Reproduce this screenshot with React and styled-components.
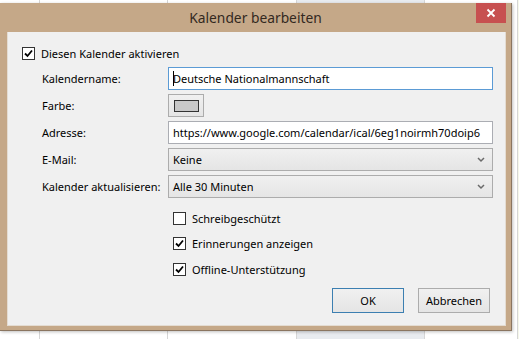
import React from 'react';
import styled, { createGlobalStyle } from 'styled-components';

const GlobalStyle = createGlobalStyle`
  html, body {
    margin: 0;
    padding: 0;
    background: #ffffff;
  }
  body {
    font-family: 'Noto Sans', 'Open Sans', sans-serif;
    font-size: 11px;
    color: #000;
  }
`;

const Desktop = styled.div`
  position: relative;
  width: 519px;
  height: 339px;
  overflow: hidden;
  display: flex;
  background: #ffffff;
`;

const GridColumn = styled.div`
  flex: 0 0 ${({ w }) => w}px;
  border-left: 1px solid ${({ $first }) => ($first ? 'transparent' : '#d6d6d6')};
  background: ${({ $tint }) => $tint || '#ffffff'};
`;

const Window = styled.div`
  position: absolute;
  top: 3px;
  left: 0;
  width: 511px;
  height: 327px;
  display: flex;
  flex-direction: column;
  background: #c5a888;
  border-right: 1px solid #8a7560;
  border-bottom: 1px solid #8a7560;
  box-shadow: 1px 1px 3px rgba(0, 0, 0, 0.25);
`;

const TitleBar = styled.div`
  flex: 0 0 29px;
  display: grid;
  grid-template-columns: 1fr auto 1fr;
  align-items: center;
`;

const Title = styled.div`
  grid-column: 2;
  font-size: 13.8px;
  color: #33291f;
`;

const CloseButton = styled.div`
  grid-column: 3;
  justify-self: end;
  align-self: start;
  width: 30px;
  height: 20px;
  margin-right: 5px;
  background: #c75050;
  display: flex;
  align-items: center;
  justify-content: center;
`;

const Content = styled.div`
  flex: 1;
  margin: 0 5px 4px 7px;
  background: #f0f0f0;
  border: 1px solid #e4dcd2;
  border-top: none;
  padding: 13px 12px 0 14px;
  display: flex;
  flex-direction: column;
`;

const CheckRow = styled.label`
  display: flex;
  align-items: center;
  gap: 6px;
  height: 16px;
  white-space: nowrap;
`;

const Box = styled.span`
  width: 11px;
  height: 11px;
  border: 1px solid #333;
  background: #fff;
  display: flex;
  align-items: center;
  justify-content: center;
`;

const Form = styled.div`
  display: grid;
  grid-template-columns: 126px 1fr;
  grid-auto-rows: 23px;
  row-gap: 4px;
  margin: 6px 0 0 20px;
  align-items: center;
`;

const Label = styled.div`
  white-space: nowrap;
`;

const TextBox = styled.div`
  height: 100%;
  box-sizing: border-box;
  border: 1px solid ${({ $focus }) => ($focus ? '#5b9bd5' : '#abadb3')};
  background: #fff;
  padding: 0 4px;
  display: flex;
  align-items: center;
  overflow: hidden;
  white-space: nowrap;
`;

const Caret = styled.span`
  width: 1px;
  height: 15px;
  background: #000;
  margin-right: -1px;
`;

const ColorButton = styled.div`
  width: 36px;
  height: 23px;
  box-sizing: border-box;
  border: 1px solid #acacac;
  background: linear-gradient(#f0f0f0, #e5e5e5);
  display: flex;
  align-items: center;
  justify-content: center;
`;

const Swatch = styled.div`
  width: 23px;
  height: 10px;
  border: 1px solid #333;
  background: #c8c8c8;
`;

const Select = styled.div`
  height: 100%;
  box-sizing: border-box;
  border: 1px solid #acacac;
  background: linear-gradient(#f0f0f0, #e5e5e5);
  padding: 0 7px 0 4px;
  display: flex;
  align-items: center;
  justify-content: space-between;
`;

const Options = styled.div`
  display: flex;
  flex-direction: column;
  gap: 9.5px;
  margin: 12px 0 0 151px;
`;

const Buttons = styled.div`
  display: flex;
  justify-content: flex-end;
  gap: 14px;
  margin: 11px 3px 0 0;
`;

const Button = styled.div`
  width: 72px;
  height: 25px;
  box-sizing: border-box;
  border: 1px solid ${({ $default }) => ($default ? '#3c7fb1' : '#acacac')};
  background: linear-gradient(#f0f0f0, #e5e5e5);
  display: flex;
  align-items: center;
  justify-content: center;
`;

const Check = () => (
  <svg width="9" height="9" viewBox="0 0 9 9">
    <path d="M1 4.5 L3.5 7 L8 1.5" fill="none" stroke="#000" strokeWidth="1.8" />
  </svg>
);

const Chevron = () => (
  <svg width="8" height="6" viewBox="0 0 8 6">
    <path d="M1 1 L4 4 L7 1" fill="none" stroke="#6a6a6a" strokeWidth="1.5" />
  </svg>
);

const Checkbox = ({ checked, children }) => (
  <CheckRow>
    <Box>{checked && <Check />}</Box>
    {children}
  </CheckRow>
);

const columns = [
  { w: 38, first: true },
  { w: 127 },
  { w: 128 },
  { w: 127, tint: '#e8ebef' },
  { w: 92 },
  { w: 7, tint: '#f6f8ea' },
];

export default function App() {
  return (
    <>
      <GlobalStyle />
      <Desktop>
        {columns.map((c, i) => (
          <GridColumn key={i} w={c.w} $first={c.first} $tint={c.tint} />
        ))}
        <Window>
          <TitleBar>
            <Title>Kalender bearbeiten</Title>
            <CloseButton>
              <svg width="10" height="10" viewBox="0 0 10 10">
                <path d="M1.5 1.5 L8.5 8.5 M8.5 1.5 L1.5 8.5" stroke="#fff" strokeWidth="1.8" />
              </svg>
            </CloseButton>
          </TitleBar>
          <Content>
            <Checkbox checked>Diesen Kalender aktivieren</Checkbox>
            <Form>
              <Label>Kalendername:</Label>
              <TextBox $focus>
                <Caret />
                Deutsche Nationalmannschaft
              </TextBox>
              <Label>Farbe:</Label>
              <ColorButton>
                <Swatch />
              </ColorButton>
              <Label>Adresse:</Label>
              <TextBox>https://www.google.com/calendar/ical/6eg1noirmh70doip6</TextBox>
              <Label>E-Mail:</Label>
              <Select>
                Keine
                <Chevron />
              </Select>
              <Label>Kalender aktualisieren:</Label>
              <Select>
                Alle 30 Minuten
                <Chevron />
              </Select>
            </Form>
            <Options>
              <Checkbox>Schreibgeschützt</Checkbox>
              <Checkbox checked>Erinnerungen anzeigen</Checkbox>
              <Checkbox checked>Offline-Unterstützung</Checkbox>
            </Options>
            <Buttons>
              <Button $default>OK</Button>
              <Button>Abbrechen</Button>
            </Buttons>
          </Content>
        </Window>
      </Desktop>
    </>
  );
}
